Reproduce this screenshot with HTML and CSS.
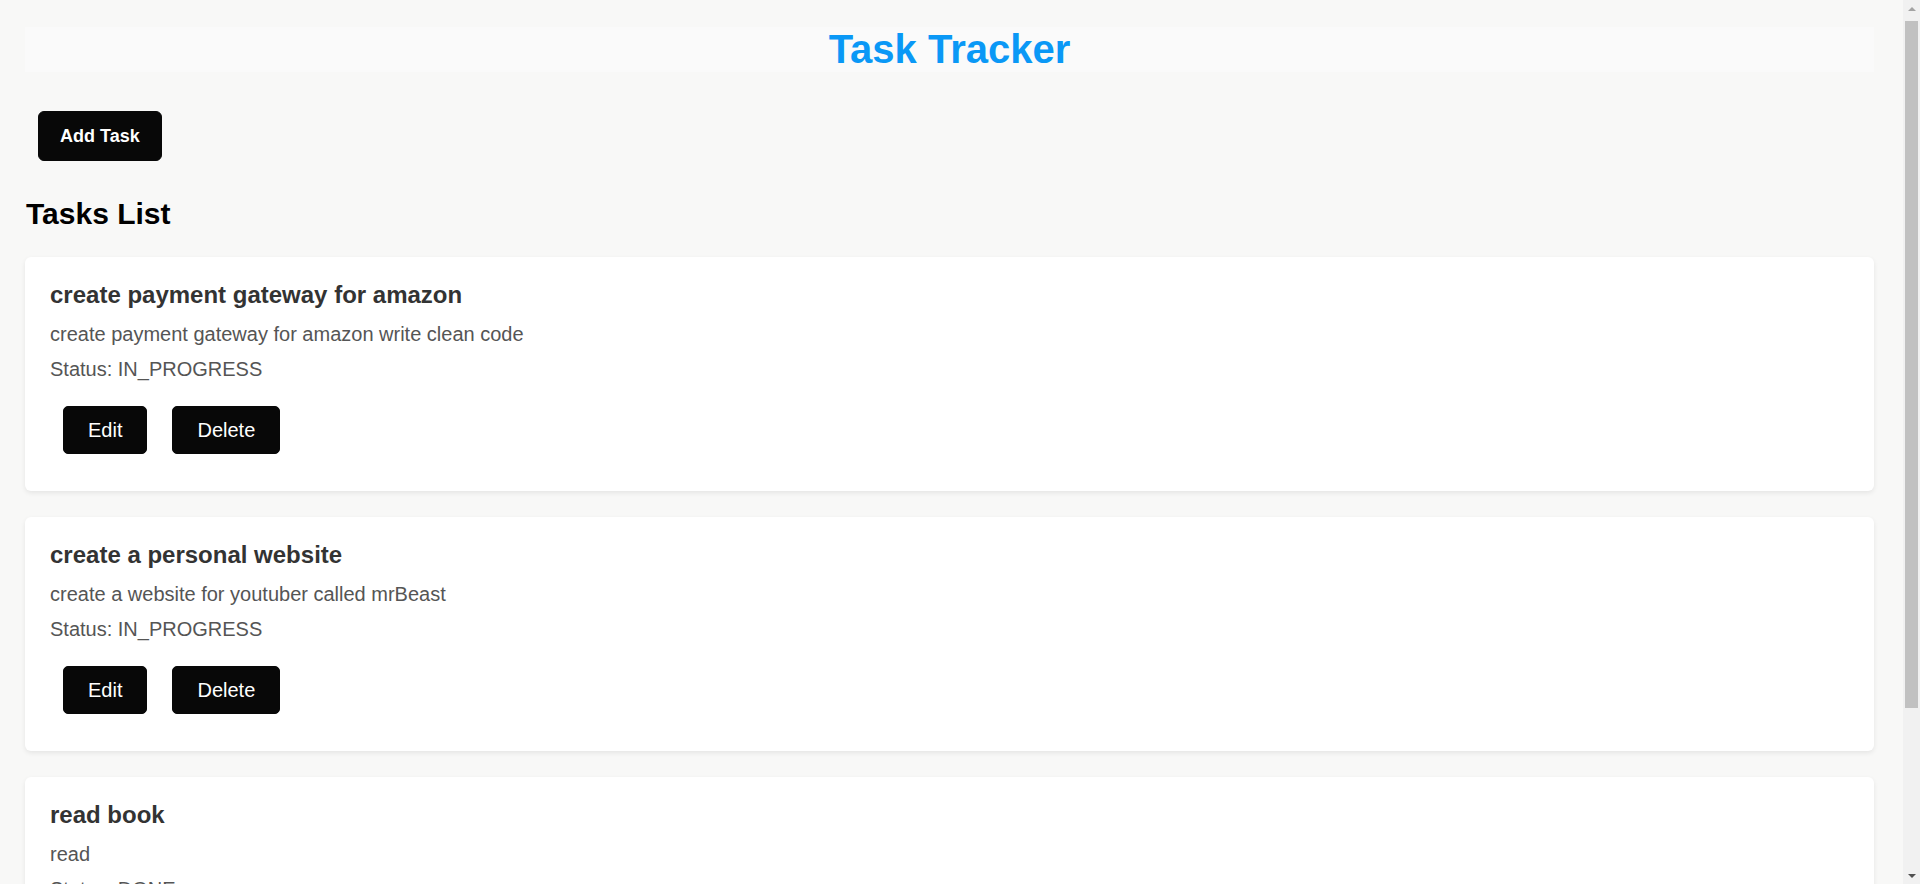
FILE: index.html
```html
<!DOCTYPE html>
<html lang="en">
<head>
<meta charset="utf-8">
<title>Task Tracker</title>
<link rel="stylesheet" href="styles.css">
</head>
<body>
<div class="app">
  <h1 class="app-title">Task Tracker</h1>
  <div class="toolbar">
    <button class="btn btn-add">Add Task</button>
  </div>
  <h2 class="section-title">Tasks List</h2>
  <div class="task-list">
    <div class="task-card">
      <h3 class="task-title">create payment gateway for amazon</h3>
      <p class="task-desc">create payment gateway for amazon write clean code</p>
      <p class="task-status">Status: IN_PROGRESS</p>
      <div class="task-actions">
        <button class="btn btn-action">Edit</button>
        <button class="btn btn-action">Delete</button>
      </div>
    </div>
    <div class="task-card">
      <h3 class="task-title">create a personal website</h3>
      <p class="task-desc">create a website for youtuber called mrBeast</p>
      <p class="task-status">Status: IN_PROGRESS</p>
      <div class="task-actions">
        <button class="btn btn-action">Edit</button>
        <button class="btn btn-action">Delete</button>
      </div>
    </div>
    <div class="task-card">
      <h3 class="task-title">read book</h3>
      <p class="task-desc">read</p>
      <p class="task-status">Status: DONE</p>
      <div class="task-actions">
        <button class="btn btn-action">Edit</button>
        <button class="btn btn-action">Delete</button>
      </div>
    </div>
  </div>
</div>
<div class="scrollbar" aria-hidden="true">
  <div class="scroll-btn scroll-up"></div>
  <div class="scroll-thumb"></div>
  <div class="scroll-track"></div>
  <div class="scroll-btn scroll-down"></div>
</div>
</body>
</html>
```

FILE: styles.css
```css
html, body {
  margin: 0;
  padding: 0;
}

body {
  background: #f8f8f7;
  font-family: "Liberation Sans", Arial, sans-serif;
  color: #000;
  padding-right: 17px;
}

.app {
  padding: 27px 29px 40px 25px;
}

.app-title {
  margin: 0;
  height: 45px;
  line-height: 45px;
  font-size: 40px;
  font-weight: bold;
  text-align: center;
  color: #0a98f6;
  background: #fafafa;
}

.toolbar {
  margin-top: 39px;
  padding-left: 13px;
  display: flex;
}

.btn {
  font-family: "Liberation Sans", Arial, sans-serif;
  background: #080808;
  color: #fff;
  border: 1px solid #080808;
  cursor: pointer;
}

.btn-add {
  font-size: 18px;
  font-weight: bold;
  line-height: 20px;
  padding: 14px 21px;
  border-radius: 6px;
}

.section-title {
  margin: 36px 0 26px 1px;
  font-size: 30px;
  line-height: 34px;
  font-weight: bold;
}

.task-list {
  display: flex;
  flex-direction: column;
  gap: 26px;
}

.task-card {
  background: #fff;
  border-radius: 6px;
  box-shadow: 0 2px 5px rgba(0, 0, 0, 0.08);
  padding: 24px 25px 37px 25px;
}

.task-title {
  margin: 0;
  font-size: 24px;
  line-height: 28px;
  font-weight: bold;
  color: #333;
}

.task-desc,
.task-status {
  margin: 0;
  font-size: 20px;
  line-height: 23px;
  color: #555;
}

.task-desc {
  margin-top: 14px;
}

.task-status {
  margin-top: 12px;
}

.task-actions {
  margin-top: 25px;
  padding-left: 13px;
  display: flex;
  gap: 25px;
}

.btn-action {
  font-size: 20px;
  line-height: 22px;
  padding: 12px 24px;
  border-radius: 5px;
}

/* imitation of the window's classic scrollbar */
.scrollbar {
  position: fixed;
  top: 0;
  right: 0;
  width: 17px;
  height: 100vh;
  background: #f1f1f1;
  display: flex;
  flex-direction: column;
}

.scroll-btn {
  height: 17px;
  flex: none;
  display: flex;
  align-items: center;
  justify-content: center;
}

.scroll-btn::before {
  content: "";
  width: 0;
  height: 0;
  border-left: 4px solid transparent;
  border-right: 4px solid transparent;
}

.scroll-up::before {
  border-bottom: 4px solid #a3a3a3;
}

.scroll-down::before {
  border-top: 4px solid #505050;
}

.scroll-thumb {
  flex: none;
  height: 687px;
  margin: 4px 2px 0;
  background: #c1c1c1;
}

.scroll-track {
  flex: 1;
}
```
